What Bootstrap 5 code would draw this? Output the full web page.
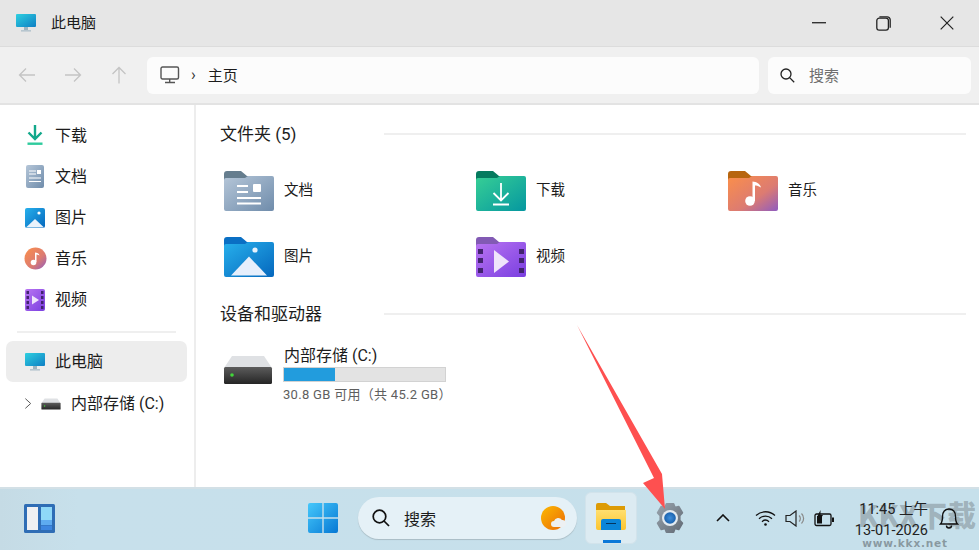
<!DOCTYPE html>
<html lang="zh-CN">
<head>
    <meta charset="UTF-8">
    <meta name="viewport" content="width=device-width, initial-scale=1.0">
    <title>此电脑</title>
    <link href="https://cdn.jsdelivr.net/npm/bootstrap@5.3.0/dist/css/bootstrap.min.css" rel="stylesheet">
    <style>
        html, body { height: 100%; }
        body {
            font-family: Roboto, "Noto Sans CJK SC", sans-serif;
            font-size: 15px;
            color: #1c1c1c;
            overflow: hidden;
            background: #fff;
        }
        .app { height: 550px; position: relative; }

        .titlebar { height: 47px; background: #e6e6e6; border-bottom: 1px solid #dcdcdc; flex: none; }
        .app-icon { margin: 0 14px 0 15px; }
        .win-btn { width: 64px; height: 46px; }

        .toolbar { height: 58px; background: #f0f0f0; border-bottom: 2px solid #e3e3e3; flex: none; padding: 10px 8px 10px 0; }
        .nav-btn { width: 46px; }
        .address { width: 612px; height: 37px; background: #fcfcfc; border-radius: 6px; margin-left: 5px; padding-left: 13px; }
        .address > span:last-child, .searchbox span { padding-top: 2px; }
        .crumb-sep { margin: 0 12px 0 11px; font-size: 16px; color: #333; }
        .searchbox { flex: 1; height: 37px; background: #fcfcfc; border-radius: 6px; margin-left: 9px; padding-left: 12px; gap: 14px; color: #6e6e6e; }

        .sidebar { width: 196px; flex: none; border-right: 2px solid #ededed; padding: 10px 7px 0 6px; font-size: 16px; }
        .side-item { height: 41px; padding-left: 16px; border-radius: 7px; gap: 7px; }
        .side-item svg { flex: none; }
        .side-item.active { background: #ededed; }
        .side-icon { width: 26px; height: 24px; }
        .side-sep { height: 2px; background: #efefef; margin: 11px 11px 8px 11px; }
        .side-drive { padding-left: 18px; gap: 0; margin-top: 1px; }
        .side-drive .drive-ic { margin: 0 10px 0 9px; }

        .main { flex: 1; padding: 17px 13px 0 24px; min-width: 0; }
        .section-head { height: 24px; font-size: 17px; }
        .section-head .title { width: 164px; flex: none; padding-top: 1px; }
        .section-head .rule { flex: 1; height: 2px; background: #efefef; }
        .folder-grid { display: grid; grid-template-columns: repeat(3, 252px); grid-auto-rows: 66px; padding: 11.5px 0 12.5px 4px; }
        .tile { gap: 10px; font-size: 14.5px; }
        .tile span { padding-top: 1px; }
        .drive-row { padding: 21px 0 0 3px; gap: 10px; }
        .drive-name { font-size: 16px; line-height: 22px; margin-top: -3px; padding: 1px 0 0 1px; }
        .drive-bar { width: 163px; height: 15px; background: #e3e3e3; border: 1px solid #d2d2d2; border-radius: 0; margin: 0 0 3px; }
        .drive-bar .progress-bar { background: #229cdd; }
        .drive-sub { font-size: 13px; color: #5e5e5e; letter-spacing: .3px; line-height: 20px; }

        .taskbar { height: 63px; flex: none; background: linear-gradient(90deg, #c5dbe5 0, #c7e0eb 8%, #c6e0eb 100%); border-top: 2px solid #d3e0e6; padding: 0 0 3px 24px; }
        .task-search { width: 219px; height: 42px; margin-left: 20px; padding: 0 10px 0 14px; border-radius: 21px; background: #e5f1f7; box-shadow: 0 1px 1px #a9bcc5; gap: 14px; font-size: 16px; }
        .task-search span { padding-top: 3px; }
        .task-active { width: 52px; height: 52px; margin-left: 8px; background: #dcebf2; border: 1px solid #d2e3eb; border-radius: 6px; position: relative; }
        .task-active::after { content: ""; position: absolute; left: 17px; bottom: 0; width: 18px; height: 3px; background: #0b78d8; }
        .clock { font-size: 14.5px; line-height: 21px; color: #222; text-align: right; width: 74px; margin-left: 19px; padding-top: 4px; white-space: nowrap; position: relative; z-index: 1; }
        .bell { position: relative; z-index: 1; }
        .watermark { position: absolute; right: 3px; bottom: 1px; width: 118px; text-align: center; pointer-events: none; }
        .wm-big { font-size: 29px; line-height: 30px; font-weight: 900; color: rgba(105,115,120,.42); margin-bottom: 8px; white-space: nowrap; font-family: "Noto Sans CJK SC", sans-serif; }
        .wm-url { font-size: 10.5px; line-height: 12px; font-weight: 700; letter-spacing: .8px; color: rgba(95,105,110,.6); padding-right: 24px; font-family: "DejaVu Sans", sans-serif; }
        .arrow-mark { position: absolute; left: 570px; top: 320px; pointer-events: none; }
    </style>
</head>
<body>
<svg width="0" height="0" class="position-absolute">
    <defs>
        <linearGradient id="gMon" x1="0" y1="0" x2="1" y2="1"><stop offset="0" stop-color="#2ed0e0"/><stop offset="1" stop-color="#0f7fc4"/></linearGradient>
        <linearGradient id="gDoc" x1="0" y1="0" x2="1" y2="1"><stop offset="0" stop-color="#b5c6d8"/><stop offset="1" stop-color="#6f8cab"/></linearGradient>
        <linearGradient id="gDl" x1="0" y1="0" x2="1" y2="1"><stop offset="0" stop-color="#37cf95"/><stop offset="1" stop-color="#0597a0"/></linearGradient>
        <linearGradient id="gPic" x1="0" y1="0" x2="1" y2="1"><stop offset="0" stop-color="#27b0ec"/><stop offset="1" stop-color="#0567bd"/></linearGradient>
        <linearGradient id="gMus" x1="0" y1="0" x2="1" y2="1"><stop offset="0" stop-color="#fb8f4a"/><stop offset=".6" stop-color="#dc7b72"/><stop offset="1" stop-color="#8f5cc0"/></linearGradient>
        <linearGradient id="gVid" x1="0" y1="0" x2="1" y2="1"><stop offset="0" stop-color="#b974f2"/><stop offset="1" stop-color="#7a3fe0"/></linearGradient>
        <linearGradient id="gHdd" x1="0" y1="0" x2="0" y2="1"><stop offset="0" stop-color="#5c5c5c"/><stop offset="1" stop-color="#252525"/></linearGradient>
        <linearGradient id="gWin" x1="0" y1="0" x2="1" y2="1"><stop offset="0" stop-color="#45c8fb"/><stop offset="1" stop-color="#0678d4"/></linearGradient>
        <linearGradient id="gFold" x1="0" y1="0" x2="0" y2="1"><stop offset="0" stop-color="#ffdf70"/><stop offset="1" stop-color="#fcc52f"/></linearGradient>
        <linearGradient id="gSun" x1="0" y1="0" x2="1" y2="1"><stop offset="0" stop-color="#fcb900"/><stop offset="1" stop-color="#ea6a0a"/></linearGradient>
        <linearGradient id="gGear" x1="0" y1="0" x2="1" y2="1"><stop offset="0" stop-color="#98a3ad"/><stop offset="1" stop-color="#626b75"/></linearGradient>
        <radialGradient id="gHub"><stop offset="0" stop-color="#3f8fdc"/><stop offset="1" stop-color="#1b62ad"/></radialGradient>
        <symbol id="ic-monitor" viewBox="0 0 22 20">
            <rect x="1" y="1" width="20" height="13" rx="1" fill="url(#gMon)"/>
            <rect x="9" y="14" width="4" height="3" fill="#9fb4c0"/><rect x="6" y="17" width="10" height="1.6" fill="#b7c6cf"/>
        </symbol>
        <symbol id="ic-hdd" viewBox="0 0 50 30">
            <path d="M9 1h32l8 12H1z" fill="#dfe1e4"/><rect x="1" y="12" width="48" height="17" rx="1.5" fill="url(#gHdd)"/>
            <circle cx="9" cy="20" r="1.8" fill="#42d63a"/>
        </symbol>
    </defs>
</svg>

<div class="app d-flex flex-column">
    <!-- title bar -->
    <div class="titlebar d-flex align-items-center">
        <svg class="app-icon" width="22" height="20"><use href="#ic-monitor"/></svg>
        <span class="flex-grow-1">此电脑</span>
        <div class="win-btn d-flex align-items-center justify-content-center">
            <svg width="14" height="2"><rect width="14" height="1.4" fill="#333"/></svg>
        </div>
        <div class="win-btn d-flex align-items-center justify-content-center">
            <svg width="15" height="15" viewBox="0 0 15 15" fill="none" stroke="#222" stroke-width="1.3"><rect x=".8" y="2.2" width="11.6" height="12" rx="2.4"/><path d="M3.4 .8h7.8a3 3 0 0 1 3 3v8"/></svg>
        </div>
        <div class="win-btn d-flex align-items-center justify-content-center">
            <svg width="14" height="14" viewBox="0 0 14 14" stroke="#222" stroke-width="1.2"><path d="M.7.7l12.6 12.6M13.3.7L.7 13.3"/></svg>
        </div>
    </div>

    <!-- toolbar -->
    <div class="toolbar d-flex align-items-center">
        <div class="nav-btn d-flex justify-content-center ms-1">
            <svg width="18" height="16" viewBox="0 0 18 16" fill="none" stroke="#c4c4c4" stroke-width="1.3"><path d="M17 8H1.5M8 1.5L1.5 8 8 14.5"/></svg>
        </div>
        <div class="nav-btn d-flex justify-content-center">
            <svg width="18" height="16" viewBox="0 0 18 16" fill="none" stroke="#c4c4c4" stroke-width="1.3"><path d="M1 8h15.5M10 1.5L16.5 8 10 14.5"/></svg>
        </div>
        <div class="nav-btn d-flex justify-content-center">
            <svg width="16" height="18" viewBox="0 0 16 18" fill="none" stroke="#c4c4c4" stroke-width="1.3"><path d="M8 17.5V1.5M1.5 8L8 1.5 14.5 8"/></svg>
        </div>
        <div class="address d-flex align-items-center">
            <svg width="20" height="18" viewBox="0 0 20 18" fill="none" stroke="#555" stroke-width="1.4"><rect x="1" y="1" width="17.5" height="12" rx="1.5"/><path d="M9.7 13v3M5 16.5h10"/></svg>
            <span class="crumb-sep">›</span>
            <span>主页</span>
        </div>
        <div class="searchbox d-flex align-items-center">
            <svg width="15" height="15" viewBox="0 0 15 15" fill="none" stroke="#222" stroke-width="1.3"><circle cx="6" cy="6" r="5"/><path d="M9.6 9.6l4.6 4.6"/></svg>
            <span>搜索</span>
        </div>
    </div>

    <!-- body -->
    <div class="d-flex flex-grow-1 overflow-hidden">
        <div class="sidebar">
            <div class="side-item d-flex align-items-center">
                <span class="side-icon d-flex align-items-center justify-content-center">
                    <svg width="18" height="21" viewBox="0 0 18 21"><path d="M9 0v13M2.5 7.5L9 14l6.5-6.5" fill="none" stroke="#12a88b" stroke-width="2.4"/><rect x="1.5" y="17.5" width="15" height="2.4" fill="#2fcb9d"/></svg>
                </span>
                <span>下载</span>
            </div>
            <div class="side-item d-flex align-items-center">
                <span class="side-icon d-flex align-items-center justify-content-center">
                    <svg width="18" height="23" viewBox="0 0 18 23"><rect width="18" height="23" rx="2" fill="url(#gDoc)"/><path d="M3 6h7M3 9h7M3 13h12M3 16.5h12" stroke="#fff" stroke-width="1.2"/><rect x="11" y="5" width="4" height="4" fill="#fff"/></svg>
                </span>
                <span>文档</span>
            </div>
            <div class="side-item d-flex align-items-center">
                <span class="side-icon d-flex align-items-center justify-content-center">
                    <svg width="20" height="20" viewBox="0 0 20 20"><rect width="20" height="20" rx="2" fill="url(#gPic)"/><path d="M1 19.5L10 11l9 8.5z" fill="#eaf3fc"/><circle cx="14" cy="5" r="1.6" fill="#fff"/></svg>
                </span>
                <span>图片</span>
            </div>
            <div class="side-item d-flex align-items-center">
                <span class="side-icon d-flex align-items-center justify-content-center">
                    <svg width="23" height="23" viewBox="0 0 23 23"><circle cx="11.5" cy="11.5" r="11" fill="url(#gMus)"/><circle cx="9.5" cy="15.5" r="2.8" fill="#fff"/><path d="M11 15V5.5c2 0 4 .8 4.5 3-1.5-.8-2.5-1-3-1V15z" fill="#fff"/></svg>
                </span>
                <span>音乐</span>
            </div>
            <div class="side-item d-flex align-items-center">
                <span class="side-icon d-flex align-items-center justify-content-center">
                    <svg width="20" height="22" viewBox="0 0 20 22"><rect width="20" height="22" rx="2" fill="url(#gVid)"/><path d="M1.5 2h2.5v3H1.5zM1.5 7h2.5v3H1.5zM1.5 12h2.5v3H1.5zM1.5 17h2.5v3H1.5zM16 2h2.5v3H16zM16 7h2.5v3H16zM16 12h2.5v3H16zM16 17h2.5v3H16z" fill="#42236f"/><path d="M7 6.5l7 4.5-7 4.5z" fill="#efe4fb"/></svg>
                </span>
                <span>视频</span>
            </div>
            <div class="side-sep"></div>
            <div class="side-item active d-flex align-items-center">
                <span class="side-icon d-flex align-items-center justify-content-center">
                    <svg width="22" height="20"><use href="#ic-monitor"/></svg>
                </span>
                <span>此电脑</span>
            </div>
            <div class="side-item side-drive d-flex align-items-center">
                <svg width="8" height="13" viewBox="0 0 9 13" fill="none" stroke="#555" stroke-width="1.1"><path d="M1.5 1l6 5.5-6 5.5"/></svg>
                <svg class="drive-ic" width="20" height="12"><use href="#ic-hdd"/></svg>
                <span>内部存储 (C:)</span>
            </div>
        </div>

        <div class="main">
            <div class="section-head d-flex align-items-center">
                <span class="title">文件夹 (5)</span>
                <span class="rule"></span>
            </div>
            <div class="folder-grid">
                <div class="tile d-flex align-items-center">
                    <svg width="50" height="40" viewBox="0 0 50 40">
                        <path d="M0 3a3 3 0 0 1 3-3h14l6 5h24v8H0z" fill="#657d8e"/>
                        <path d="M0 9a2 2 0 0 1 2-2h19l3-2h24a2 2 0 0 1 2 2v31a2 2 0 0 1-2 2H2a2 2 0 0 1-2-2z" fill="url(#gDoc)"/>
                        <path d="M13 15h11M13 21h11M13 27h24M13 32.5h24" stroke="#fff" stroke-width="1.8"/><rect x="29" y="13" width="8" height="8" rx="1" fill="#fff"/>
                    </svg>
                    <span>文档</span>
                </div>
                <div class="tile d-flex align-items-center">
                    <svg width="50" height="40" viewBox="0 0 50 40">
                        <path d="M0 3a3 3 0 0 1 3-3h14l6 5h24v8H0z" fill="#057a5e"/>
                        <path d="M0 9a2 2 0 0 1 2-2h19l3-2h24a2 2 0 0 1 2 2v31a2 2 0 0 1-2 2H2a2 2 0 0 1-2-2z" fill="url(#gDl)"/>
                        <path d="M25 12v17M17.5 22l7.5 7.5 7.5-7.5M17 33.5h16" fill="none" stroke="#fff" stroke-width="1.8"/>
                    </svg>
                    <span>下载</span>
                </div>
                <div class="tile d-flex align-items-center">
                    <svg width="50" height="40" viewBox="0 0 50 40">
                        <path d="M0 3a3 3 0 0 1 3-3h14l6 5h24v8H0z" fill="#b7650f"/>
                        <path d="M0 9a2 2 0 0 1 2-2h19l3-2h24a2 2 0 0 1 2 2v31a2 2 0 0 1-2 2H2a2 2 0 0 1-2-2z" fill="url(#gMus)"/>
                        <circle cx="22" cy="30" r="4.8" fill="#fff"/><path d="M24.5 30V10.5c4 .5 7.5 2 8.5 6-3-1.8-5-2-6-2V30z" fill="#fff"/>
                    </svg>
                    <span>音乐</span>
                </div>
                <div class="tile d-flex align-items-center">
                    <svg width="50" height="40" viewBox="0 0 50 40">
                        <path d="M0 3a3 3 0 0 1 3-3h14l6 5h24v8H0z" fill="#0a6fc4"/>
                        <path d="M0 9a2 2 0 0 1 2-2h19l3-2h24a2 2 0 0 1 2 2v31a2 2 0 0 1-2 2H2a2 2 0 0 1-2-2z" fill="url(#gPic)"/>
                        <path d="M7 38.5L25 19.5l18 19z" fill="#e6effc"/><circle cx="31" cy="13" r="2.6" fill="#e6f2fc"/>
                    </svg>
                    <span>图片</span>
                </div>
                <div class="tile d-flex align-items-center">
                    <svg width="50" height="40" viewBox="0 0 50 40">
                        <path d="M0 3a3 3 0 0 1 3-3h14l6 5h24v8H0z" fill="#825ab4"/>
                        <path d="M0 9a2 2 0 0 1 2-2h19l3-2h24a2 2 0 0 1 2 2v31a2 2 0 0 1-2 2H2a2 2 0 0 1-2-2z" fill="url(#gVid)"/>
                        <path d="M2 12h5v5H2zM2 21h5v5H2zM2 31h5v5H2zM43 12h5v5h-5zM43 21h5v5h-5zM43 31h5v5h-5z" fill="#42236f"/>
                        <path d="M18 13l15 11.5L18 36z" fill="#efe4fb"/>
                    </svg>
                    <span>视频</span>
                </div>
            </div>
            <div class="section-head d-flex align-items-center">
                <span class="title">设备和驱动器</span>
                <span class="rule"></span>
            </div>
            <div class="drive-row d-flex">
                <svg class="mt-2" width="50" height="30"><use href="#ic-hdd"/></svg>
                <div>
                    <div class="drive-name">内部存储 (C:)</div>
                    <div class="progress drive-bar">
                        <div class="progress-bar" style="width: 31.4%"></div>
                    </div>
                    <div class="drive-sub">30.8 GB 可用（共 45.2 GB）</div>
                </div>
            </div>
        </div>
    </div>

    <!-- taskbar -->
    <div class="taskbar d-flex align-items-center">
        <svg width="31" height="29" viewBox="0 0 31 29">
            <rect width="31" height="29" rx="1.5" fill="#2f6db5"/>
            <rect x="3" y="3" width="11" height="23" fill="#f0f0f2"/>
            <rect x="17" y="3" width="11" height="13" fill="#8fd8f8"/><rect x="17" y="16" width="11" height="5" fill="#5eabf0"/><rect x="17" y="21.5" width="11" height="4.5" fill="#3d86e0"/>
        </svg>
        <svg width="30" height="30" viewBox="0 0 30 30" style="margin-left:253px">
            <path d="M0 2a2 2 0 0 1 2-2h12.3v14.3H0zM15.7 0H28a2 2 0 0 1 2 2v12.3H15.7zM0 15.7h14.3V30H2a2 2 0 0 1-2-2zM15.7 15.7H30V28a2 2 0 0 1-2 2H15.7z" fill="url(#gWin)"/>
        </svg>
        <div class="task-search d-flex align-items-center">
            <svg width="18" height="18" viewBox="0 0 18 18" fill="none" stroke="#111" stroke-width="1.7"><circle cx="7.5" cy="7.5" r="6.3"/><path d="M12 12l5 5"/></svg>
            <span class="flex-grow-1">搜索</span>
            <svg width="26" height="26" viewBox="0 0 26 26"><circle cx="12" cy="13" r="12" fill="url(#gSun)"/><path d="M13 22a3 3 0 0 1 0-6 4.5 4.5 0 0 1 8-1 3.5 3.5 0 0 1 4 3.5 3.5 3.5 0 0 1-3 3.5z" fill="#edf0f2"/></svg>
        </div>
        <div class="task-active d-flex align-items-center justify-content-center">
            <svg width="33" height="33" viewBox="0 0 33 33">
                <path d="M1 3a2 2 0 0 1 2-2h8l4 3h15v6H1z" fill="#dd9b05"/>
                <path d="M1 8h30v18a2 2 0 0 1-2 2H3a2 2 0 0 1-2-2z" fill="url(#gFold)"/>
                <path d="M6 19a2 2 0 0 1 2-2h16a2 2 0 0 1 2 2v9H6z" fill="#0a85d8"/><rect x="11" y="21" width="10" height="1" fill="#04365f"/>
            </svg>
        </div>
        <svg width="30" height="32" viewBox="0 0 30 32" style="margin-left:18px">
            <path d="M11.5 2h7l1.3 3.7 3.9-.9 3.5 6-2.6 2.900v4.600l2.600 2.900-3.500 6-3.900-.9L18.500 30h-7l-1.300-3.700-3.900.9-3.500-6 2.600-2.900v-4.600l-2.600-2.900 3.500-6 3.900.9z" fill="url(#gGear)" stroke="url(#gGear)" stroke-width="2" stroke-linejoin="round"/>
            <circle cx="15" cy="16" r="8" fill="#e3eaf0"/><circle cx="15" cy="16" r="5.8" fill="url(#gHub)"/>
        </svg>
        <svg width="14" height="8" viewBox="0 0 14 8" fill="none" stroke="#111" stroke-width="1.6" style="margin-left:31px"><path d="M1 7l6-6 6 6"/></svg>
        <svg width="21" height="16" viewBox="0 0 21 16" fill="none" stroke="#111" stroke-width="1.3" style="margin-left:25px"><path d="M1 5.5c5.5-5 13.5-5 19 0M4 8.700c3.800-3.500 9.200-3.500 13 0M7 11.700c2.100-2 4.900-2 7 0"/><circle cx="10.500" cy="14.500" r="1.300" fill="#111" stroke="none"/></svg>
        <svg width="21" height="17" viewBox="0 0 21 17" fill="none" stroke="#222" stroke-width="1.2" style="margin-left:9px"><path d="M1 5.5h4L11 1v15l-6-4.500H1z"/><path d="M14 5.500a4 4 0 0 1 0 6M16.500 3.500a7 7 0 0 1 0 10" stroke="#888"/></svg>
        <svg width="21" height="17" viewBox="0 0 21 17" style="margin-left:8px"><rect x="1" y="4" width="16" height="11.5" rx="1.5" fill="none" stroke="#111" stroke-width="1.3"/><rect x="3" y="6" width="5" height="7.500" fill="#111"/><rect x="18" y="7.500" width="2" height="4.500" fill="#111"/><path d="M6.500 0L3 7h2.500L4.500 12 9 5H6.500z" fill="#111"/></svg>
        <div class="clock">
            <div>11:45 上午</div>
            <div>13-01-2026</div>
        </div>
        <svg class="bell" width="20" height="23" viewBox="0 0 20 23" fill="none" stroke="#111" stroke-width="1.4" style="margin-left:11px"><path d="M1.5 17c1.5-1.5 2-3 2-7.500C3.500 5 6 2 10 2s6.500 3 6.500 7.500c0 4.500.5 6 2 7.500z"/><path d="M7.500 18.500a2.500 2.500 0 0 0 5 0"/></svg>
    </div>

    <!-- watermark -->
    <div class="watermark">
        <div class="wm-big">KKX下载</div>
        <div class="wm-url">www.kkx.net</div>
    </div>

    <!-- red arrow -->
    <svg class="arrow-mark" width="110" height="195" viewBox="0 0 110 195">
        <path d="M7 5L84 158 73 163 95 189 92 154z" fill="#fe5050"/>
    </svg>
</div>
<script src="https://cdn.jsdelivr.net/npm/bootstrap@5.3.0/dist/js/bootstrap.bundle.min.js"></script>
</body>
</html>
